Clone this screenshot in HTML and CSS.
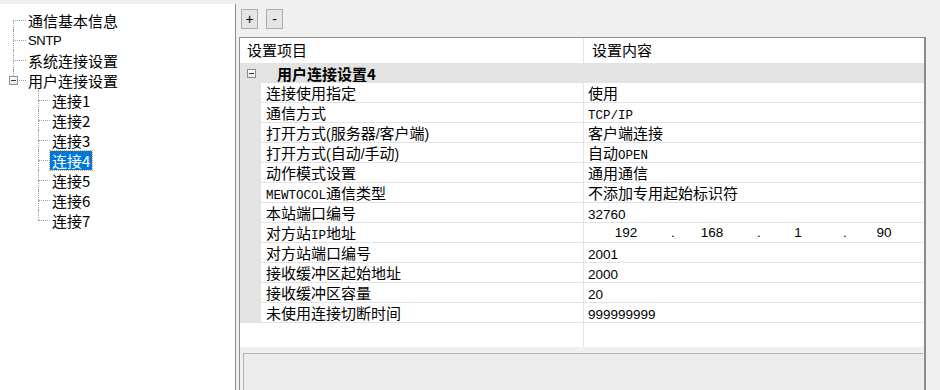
FILE: index.html
```html
<!DOCTYPE html>
<html lang="zh-CN">
<head>
<meta charset="utf-8">
<title>用户连接设置</title>
<link rel="stylesheet" href="styles.css">
</head>
<body>
<div class="app">
  <aside class="tree">
    <ul class="lvl0">
      <li class="first"><div class="node"><span class="lbl">通信基本信息</span></div></li>
      <li><div class="node"><span class="lbl lat">SNTP</span></div></li>
      <li><div class="node"><span class="lbl">系统连接设置</span></div></li>
      <li class="last">
        <div class="node"><span class="box"></span><span class="lbl">用户连接设置</span></div>
        <ul class="lvl1">
          <li><div class="node"><span class="lbl">连接1</span></div></li>
          <li><div class="node"><span class="lbl">连接2</span></div></li>
          <li><div class="node"><span class="lbl">连接3</span></div></li>
          <li><div class="node"><span class="lbl sel">连接4</span></div></li>
          <li><div class="node"><span class="lbl">连接5</span></div></li>
          <li><div class="node"><span class="lbl">连接6</span></div></li>
          <li class="last"><div class="node"><span class="lbl">连接7</span></div></li>
        </ul>
      </li>
    </ul>
  </aside>
  <main class="pane">
    <div class="toolbar">
      <button class="btn">+</button>
      <button class="btn">-</button>
    </div>
    <div class="grid">
      <div class="hdr">
        <div class="hdr-name">设置项目</div>
        <div class="hdr-val">设置内容</div>
      </div>
      <div class="cat"><span class="cbox"></span><span class="cat-lbl">用户连接设置4</span></div>
      <div class="row"><div class="ind"></div><div class="name">连接使用指定</div><div class="val">使用</div></div>
      <div class="row"><div class="ind"></div><div class="name">通信方式</div><div class="val"><span class="mono">TCP/IP</span></div></div>
      <div class="row"><div class="ind"></div><div class="name">打开方式<span class="pn">(</span>服务器<span class="pn">/</span>客户端<span class="pn">)</span></div><div class="val">客户端连接</div></div>
      <div class="row"><div class="ind"></div><div class="name">打开方式<span class="pn">(</span>自动<span class="pn">/</span>手动<span class="pn">)</span></div><div class="val">自动<span class="mono">OPEN</span></div></div>
      <div class="row"><div class="ind"></div><div class="name">动作模式设置</div><div class="val">通用通信</div></div>
      <div class="row"><div class="ind"></div><div class="name"><span class="mono">MEWTOCOL</span>通信类型</div><div class="val">不添加专用起始标识符</div></div>
      <div class="row"><div class="ind"></div><div class="name">本站端口编号</div><div class="val"><span class="num">32760</span></div></div>
      <div class="row"><div class="ind"></div><div class="name">对方站<span class="mono">IP</span>地址</div><div class="val"><div class="ip"><span class="oct num">192</span><span class="dot num">.</span><span class="oct num">168</span><span class="dot num">.</span><span class="oct num">1</span><span class="dot num">.</span><span class="oct num">90</span></div></div></div>
      <div class="row"><div class="ind"></div><div class="name">对方站端口编号</div><div class="val"><span class="num">2001</span></div></div>
      <div class="row"><div class="ind"></div><div class="name">接收缓冲区起始地址</div><div class="val"><span class="num">2000</span></div></div>
      <div class="row"><div class="ind"></div><div class="name">接收缓冲区容量</div><div class="val"><span class="num">20</span></div></div>
      <div class="row"><div class="ind"></div><div class="name">未使用连接切断时间</div><div class="val"><span class="num">999999999</span></div></div>
      <div class="filler"><div class="f-name"></div><div class="f-val"></div></div>
      <div class="desc"></div>
    </div>
  </main>
</div>
</body>
</html>
```

FILE: styles.css
```css
* { box-sizing: border-box; }
html, body { margin: 0; padding: 0; }
body {
  width: 940px;
  height: 390px;
  overflow: hidden;
  background: #f0f0f0;
  font-family: "Noto Sans CJK SC", sans-serif;
  font-size: 15px;
  color: #000;
}
.app { display: flex; height: 390px; }

/* ---------- tree ---------- */
.tree {
  width: 236px;
  margin-top: 4px;
  background: #fff;
  border-right: 1px solid #8c8c8c;
  padding-top: 6px;
}
.tree ul { list-style: none; margin: 0; padding: 0; }
.tree li { position: relative; }
.node {
  position: relative;
  height: 20px;
  display: flex;
  align-items: center;
  padding-left: 28px;
  white-space: nowrap;
}
.node::before {
  content: "";
  position: absolute;
  left: 13px;
  top: 10px;
  width: 13px;
  border-top: 1px dotted #a0a0a0;
}
.lvl0 > li::after {
  content: "";
  position: absolute;
  left: 13px;
  top: 0;
  bottom: 0;
  border-left: 1px dotted #a0a0a0;
}
.lvl0 > li.first::after { top: 10px; }
.lvl0 > li.last::after { bottom: auto; height: 10px; }
.lvl1 .node { padding-left: 52px; }
.lvl1 .node::before { left: 38px; width: 12px; }
.lvl1 > li::after {
  content: "";
  position: absolute;
  left: 38px;
  top: 0;
  bottom: 0;
  border-left: 1px dotted #a0a0a0;
}
.lvl1 > li.last::after { bottom: auto; height: 10px; }
.lbl { line-height: 19px; }
.lat { font-family: "Liberation Sans", sans-serif; font-size: 13px; letter-spacing: -0.3px; }
.sel {
  background: #0078d7;
  color: #fff;
  outline: 1px dotted #e0a060;
  padding: 0 2px;
  margin-left: -2px;
}
.box {
  position: absolute;
  z-index: 1;
  left: 9px;
  top: 6px;
  width: 9px;
  height: 9px;
  border: 1px solid #919191;
  background: linear-gradient(#ffffff, #e6e6e6);
}
.box::after {
  content: "";
  position: absolute;
  left: 1px;
  top: 3px;
  width: 5px;
  height: 1px;
  background: #1c3f7a;
}

/* ---------- right pane ---------- */
.pane { flex: 1; display: flex; flex-direction: column; }
.toolbar {
  height: 37px;
  display: flex;
  gap: 8px;
  padding: 9px 0 0 5px;
}
.btn {
  width: 17px;
  height: 20px;
  padding: 0;
  border: 1px solid #adadad;
  background: #e5e5e5;
  font-family: "Liberation Sans", sans-serif;
  font-size: 14px;
  line-height: 16px;
  color: #000;
}

.grid {
  margin-left: 3px;
  width: 687px;
  flex: 1;
  border-top: 1px solid #8f8f8f;
  border-left: 1px solid #8f8f8f;
  border-right: 2px solid #8a8a8a;
  background: #f0f0f0;
  display: flex;
  flex-direction: column;
}
.hdr {
  height: 25px;
  background: #fff;
  display: grid;
  grid-template-columns: 343px minmax(0, 1fr);
  line-height: 24px;
}
.hdr-name { padding-left: 7px; }
.hdr-val { border-left: 1px solid #e3e3e3; padding-left: 8px; }

.cat {
  height: 20px;
  background: #e3e3e3;
  display: flex;
  align-items: center;
  font-weight: bold;
}
.cbox {
  position: relative;
  width: 9px;
  height: 9px;
  margin-left: 7px;
  margin-right: 21px;
  border: 1px solid #8c8c8c;
  background: linear-gradient(#ffffff, #e8e8e8);
}
.cbox::after {
  content: "";
  position: absolute;
  left: 1px;
  top: 3px;
  width: 5px;
  height: 1px;
  background: #333;
}
.cat-lbl { line-height: 19px; }

.row {
  height: 20px;
  display: grid;
  grid-template-columns: 21px 322px minmax(0, 1fr);
  white-space: nowrap;
}
.ind { background: #e3e3e3; }
.name {
  background: #fff;
  border-bottom: 1px solid #e3e3e3;
  padding-left: 5px;
  line-height: 19px;
  overflow: hidden;
}
.val {
  background: #fff;
  border-left: 1px solid #e3e3e3;
  border-bottom: 1px solid #e3e3e3;
  padding-left: 4px;
  line-height: 19px;
  overflow: hidden;
}
.pn { font-family: "Liberation Sans", sans-serif; font-size: 14px; }
.mono { font-family: "Liberation Mono", monospace; font-size: 12.5px; }
.num { font-family: "Liberation Sans", sans-serif; font-size: 13.5px; }
.ip { display: flex; margin-left: 5px; }
.oct { width: 74px; flex: none; padding-right: 8px; text-align: center; }
.oct:last-child { width: 66px; padding-right: 0; }
.dot { width: 12px; flex: none; text-align: center; }

.filler {
  height: 24px;
  display: grid;
  grid-template-columns: 343px minmax(0, 1fr);
  background: #fff;
}
.f-val { border-left: 1px solid #e3e3e3; }
.desc {
  flex: 1;
  margin: 6px 1px 0 3px;
  border-top: 1px solid #b4b4b4;
  border-left: 1px solid #b4b4b4;
  background: #ececec;
}
```
